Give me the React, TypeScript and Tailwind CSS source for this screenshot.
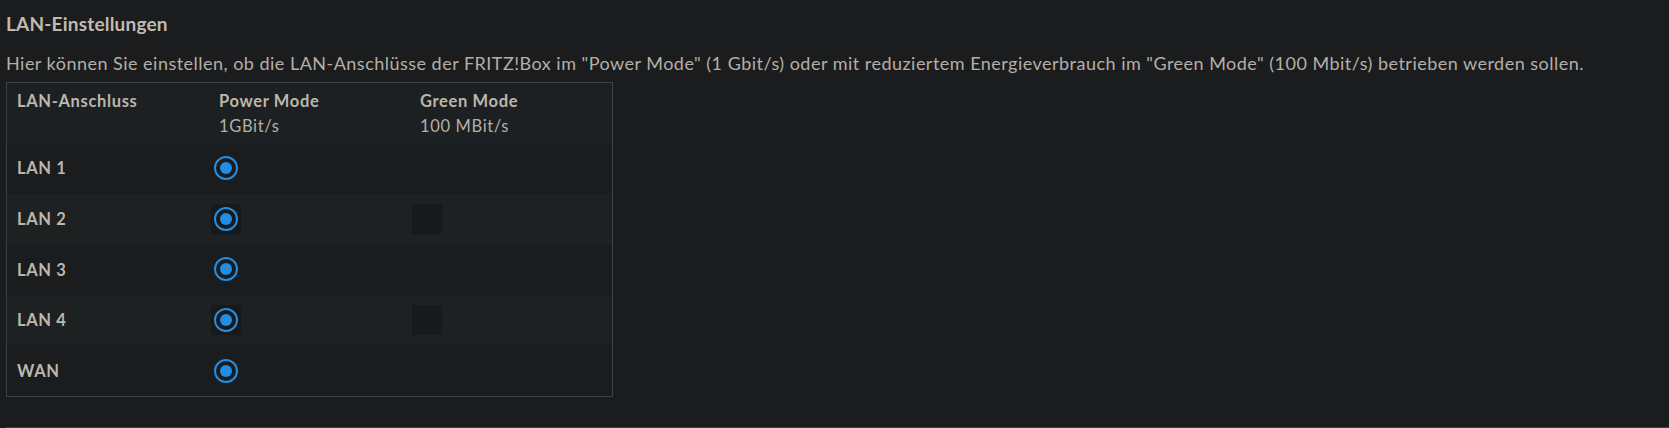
import React from "react";

const ports = ["LAN 1", "LAN 2", "LAN 3", "LAN 4", "WAN"];

const RadioCell = ({ checked, striped }: { checked: boolean; striped: boolean }) => {
  return (
    <div className="flex items-center pl-[2px]">
      <div
        className={
          "w-[30px] h-[30px] flex items-center justify-center " +
          (striped ? "bg-[#18191a]" : "bg-transparent")
        }
      >
        {checked && (
          <div className="w-[24px] h-[24px] rounded-full border-[2.5px] border-[#238de3] flex items-center justify-center">
            <div className="w-[12px] h-[12px] rounded-full bg-[#238de3]" />
          </div>
        )}
      </div>
    </div>
  );
};

const App = () => {
  return (
    <div className="min-h-screen bg-[#1b1c1e] pl-[6px] font-['Lato',sans-serif] text-[#b5afa6]">
      <h2 className="pt-[12px] text-[19px] leading-[24px] font-bold tracking-[0.2px] text-[#c0bab1]">
        LAN-Einstellungen
      </h2>
      <p className="mt-[15px] text-[18px] leading-[24px] tracking-[0.48px]">
        Hier können Sie einstellen, ob die LAN-Anschlüsse der FRITZ!Box im "Power Mode" (1 Gbit/s) oder mit
        reduziertem Energieverbrauch im "Green Mode" (100 Mbit/s) betrieben werden sollen.
      </p>

      <div className="mt-[7px] w-[607px] border border-[#3d4144] bg-[#1b1c1e]">
        <div className="grid grid-cols-[202px_201px_1fr] h-[60px] bg-[#1d2022] text-[16.5px] leading-[25px] tracking-[0.65px] pt-[6px]">
          <div className="pl-[10px] font-bold text-[#bcb6ad]">LAN-Anschluss</div>
          <div className="pl-[10px]">
            <div className="font-bold text-[#bcb6ad]">Power Mode</div>
            <div>1GBit/s</div>
          </div>
          <div className="pl-[10px]">
            <div className="font-bold text-[#bcb6ad]">Green Mode</div>
            <div>100 MBit/s</div>
          </div>
        </div>

        {ports.map((port, i) => {
          const striped = i % 2 === 1;
          return (
            <div
              key={port}
              className={
                "grid grid-cols-[202px_201px_1fr] h-[50.6px] " +
                (striped ? "bg-[#1e2122]" : "bg-[#1b1c1e]")
              }
            >
              <div className="flex items-center pl-[10px] pt-[1px] text-[16.5px] tracking-[0.65px] font-bold text-[#bcb6ad]">
                {port}
              </div>
              <RadioCell checked={true} striped={striped} />
              <RadioCell checked={false} striped={striped} />
            </div>
          );
        })}
      </div>

      <div className="mt-[30px] border-t border-[#3e4042]" />
    </div>
  );
};

export default App;
